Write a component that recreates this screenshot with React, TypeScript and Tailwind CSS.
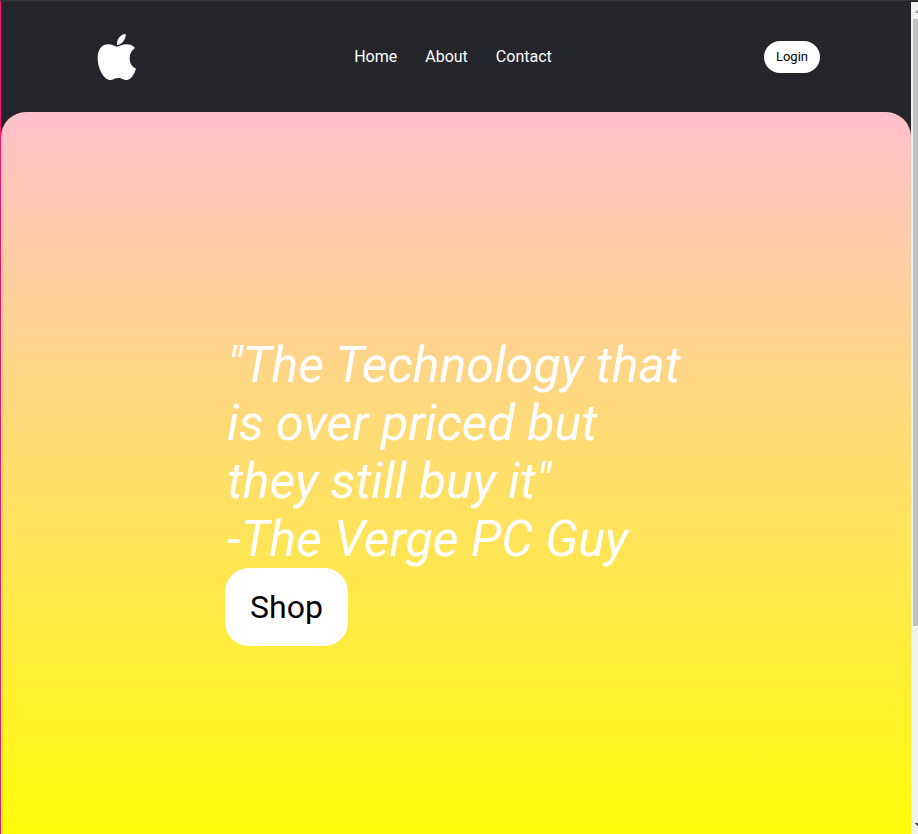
const links = ["Home", "About", "Contact"];

function AppleLogo() {
  return (
    <svg className="h-[53px] w-[50px] shrink-0" viewBox="36 30 150 159" fill="currentColor" aria-hidden="true">
      <path d="M111 75C109 59 121 43 137 42C138 57 127 74 111 75Z" />
      <path d="M111 80C102 78 96 73 85 73C64 73 53 91 53 113C53 146 72 180 91 180C100 180 104 174 115 174C126 174 129 180 140 180C152 180 163 163 168 146C156 141 149 130 149 115C149 101 155 91 165 84C158 76 149 73 140 73C127 73 119 79 111 80Z" />
    </svg>
  );
}

function Header() {
  return (
    <header className="flex h-[111px] shrink-0 items-center justify-between px-[10%]">
      <a href="#home" aria-label="Apple" className="text-white">
        <AppleLogo />
      </a>
      <nav className="flex gap-7 text-base text-white">
        {links.map((label) => (
          <a key={label} href={`#${label.toLowerCase()}`}>
            {label}
          </a>
        ))}
      </nav>
      <button type="button" className="h-8 rounded-2xl bg-white px-3 text-[13px] text-black">
        Login
      </button>
    </header>
  );
}

function Hero() {
  return (
    <main className="flex min-h-[calc(100vh-76px)] shrink-0 flex-col items-center justify-center rounded-[25px] bg-linear-to-b/srgb from-[#ffc0cb] to-[#ffff00]">
      <div className="flex w-full max-w-[462px] flex-col items-start">
        <h1 className="pl-0.5 text-[50px] leading-[58px] text-white italic">
          "The Technology that is over priced but they still buy it"
          <br />
          -The Verge PC Guy
        </h1>
        <button type="button" className="h-[78px] rounded-3xl bg-white px-[25px] text-[32px] text-black">
          Shop
        </button>
      </div>
    </main>
  );
}

function ScrollTrack() {
  return (
    <div aria-hidden="true" className="mt-px flex w-[7px] shrink-0 flex-col overflow-hidden bg-[#f1f1f1] pl-[2px]">
      <svg className="h-[17px] w-[11px] shrink-0" viewBox="0 0 11 17" shapeRendering="crispEdges">
        <path d="M2 11h7L5.500 7z" fill="#a3a3a3" />
      </svg>
      <div className="h-[73%] bg-[#c1c1c1]" />
      <svg className="mt-auto h-[17px] w-[11px] shrink-0" viewBox="0 0 11 17" shapeRendering="crispEdges">
        <path d="M2 6h7L5.500 10z" fill="#505050" />
      </svg>
    </div>
  );
}

export default function App() {
  return (
    <div className="flex h-screen overflow-hidden border-t border-[#363639] bg-[#25262b] font-['Roboto',sans-serif]">
      <div className="flex min-w-0 flex-1 flex-col overflow-hidden border-l border-[#f5146e]">
        <Header />
        <Hero />
      </div>
      <ScrollTrack />
    </div>
  );
}
